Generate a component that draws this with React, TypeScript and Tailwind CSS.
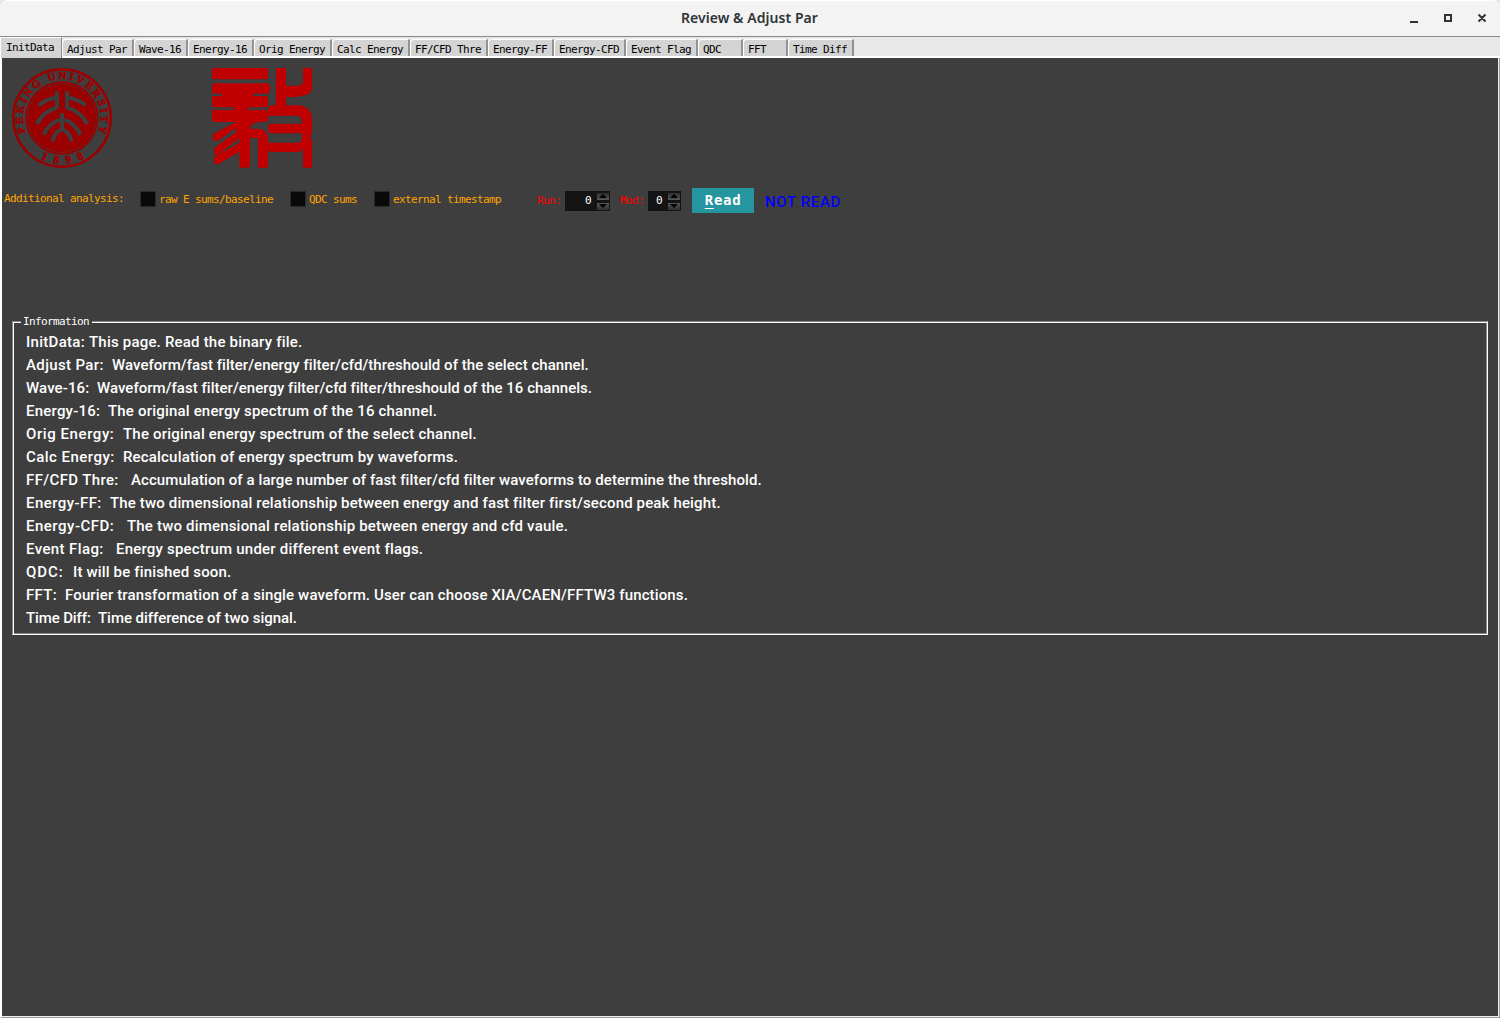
import { useLayoutEffect, useRef } from "react";

// Text stretched by letter spacing so that it takes exactly `width` pixels.
function FitText({ text, width, className = "" }: { text: string; width: number; className?: string }) {
  const ref = useRef<HTMLSpanElement>(null);
  useLayoutEffect(() => {
    const el = ref.current;
    if (!el) return;
    el.style.letterSpacing = "0px";
    const natural = el.getBoundingClientRect().width;
    el.style.letterSpacing = `${(width - natural) / text.length}px`;
  }, [text, width]);
  return (
    <span ref={ref} className={`inline-block shrink-0 whitespace-pre align-top ${className}`}>
      {text}
    </span>
  );
}

function Mono({ text, className = "" }: { text: string; className?: string }) {
  return (
    <FitText text={text} width={text.length * 6} className={`font-['DejaVu_Sans_Mono',monospace] text-[11px] ${className}`} />
  );
}

const tabs: [string, string][] = [
  ["Adjust Par", "w-[72px]"],
  ["Wave-16", "w-[54px]"],
  ["Energy-16", "w-[66px]"],
  ["Orig Energy", "w-[78px]"],
  ["Calc Energy", "w-[78px]"],
  ["FF/CFD Thre", "w-[78px]"],
  ["Energy-FF", "w-[66px]"],
  ["Energy-CFD", "w-[72px]"],
  ["Event Flag", "w-[72px]"],
  ["QDC", "w-[45px]"],
  ["FFT", "w-[45px]"],
  ["Time Diff", "w-[66px]"],
];

// Label, its advance up to the description, description, its width.
const info: [string, number, string, number][] = [
  ["InitData: ", 63, "This page. Read the binary file.", 213],
  ["Adjust Par:  ", 86, "Waveform/fast filter/energy filter/cfd/threshould of the select channel.", 476],
  ["Wave-16:  ", 71, "Waveform/fast filter/energy filter/cfd filter/threshould of the 16 channels.", 494],
  ["Energy-16:  ", 82, "The original energy spectrum of the 16 channel.", 329],
  ["Orig Energy:  ", 97, "The original energy spectrum of the select channel.", 354],
  ["Calc Energy:  ", 97, "Recalculation of energy spectrum by waveforms.", 335],
  ["FF/CFD Thre:   ", 105, "Accumulation of a large number of fast filter/cfd filter waveforms to determine the threshold.", 630],
  ["Energy-FF:  ", 84, "The two dimensional relationship between energy and fast filter first/second peak height.", 610],
  ["Energy-CFD:   ", 101, "The two dimensional relationship between energy and cfd vaule.", 441],
  ["Event Flag:   ", 90, "Energy spectrum under different event flags.", 307],
  ["QDC:  ", 47, "It will be finished soon.", 158],
  ["FFT:  ", 39, "Fourier transformation of a single waveform. User can choose XIA/CAEN/FFTW3 functions.", 623],
  ["Time Diff:  ", 72, "Time difference of two signal.", 199],
];

function Seal() {
  return (
    <svg viewBox="36 24 300 300" className="size-[100px] shrink-0 overflow-visible">
      <circle cx="186" cy="174" r="146" fill="none" stroke="#9b0000" strokeWidth="8" />
      <circle cx="186" cy="174" r="110" fill="#9b0000" />
      <circle cx="186" cy="174" r="103" fill="none" stroke="#3e3e3e" strokeWidth="2.5" strokeDasharray="9 4" />
      <g fill="none" stroke="#3e3e3e" strokeWidth="12">
        <path d="M171 94V144M201 94V144" />
        <path d="M171 112Q138 118 115 136M201 112Q234 118 257 136" />
        <path d="M173 142Q132 152 110 192M199 142Q240 152 262 192" />
        <path d="M186 160V208" />
        <path d="M186 178Q148 186 131 224M186 178Q224 186 241 224" />
        <path d="M186 208Q164 214 157 244M186 208Q208 214 215 244" />
      </g>
      <path id="sealTop" d="M78 219A117 117 0 1 1 294 219" fill="none" />
      <path id="sealBottom" d="M112 290A138 138 0 0 0 260 290" fill="none" />
      <g fill="#9b0000" stroke="#9b0000" strokeWidth="2" className="font-['Liberation_Serif',serif] font-bold">
        <text fontSize="32">
          <textPath href="#sealTop" textLength="456" startOffset="2">PEKING UNIVERSITY</textPath>
        </text>
        <text fontSize="34">
          <textPath href="#sealBottom" textLength="136" startOffset="11">1898</textPath>
        </text>
      </g>
    </svg>
  );
}

function Glyph() {
  return (
    <svg viewBox="36 24 300 300" className="size-[100px] shrink-0 overflow-visible" fill="#c00000">
      <path d="M41 24H204V53L200 58H41L36 53V29Z" />
      <path d="M41 70H204L210 78V92L204 101H160V108H198L204 113V136L198 142H144V150H198L204 156V181L198 186H178Q160 188 150 199V206H178Q204 210 204 238V323H174V234H150V318L144 323H118V275L52 314L42 308V292L118 248V234L54 285L42 283V265L108 216V204L52 244L39 240V222L108 186H41L36 180V150H101V142H41L36 136V108H66V101H41L36 95V76Z" />
      <path d="M228 24H258V77H293Q309 77 309 64V24H336V86Q330 107 304 107L292 111H258V136H300Q336 144 336 180V218L330 228L336 242V323H309V266L298 276H212L204 270V248H296Q306 246 306 234V220H212L204 214V196L212 191H306V182Q304 168 290 167H204V145L212 136H228Z" />
    </svg>
  );
}

function Check({ label, className }: { label: string; className: string }) {
  return (
    <label className={`flex h-4 items-start ${className}`}>
      <span className="mr-[3px] size-4 shrink-0 border border-[#2a2a2a] bg-[#090909]" />
      <Mono text={label} className="leading-[18px] text-[#ffa500]" />
    </label>
  );
}

function Spin({ className }: { className: string }) {
  return (
    <div className={`flex h-5 items-center justify-end bg-[#141414] pr-px ${className}`}>
      <Mono text="0" className="mr-[6px] leading-5 text-white" />
      <div className="flex flex-col gap-[3px]">
        <div className="flex h-[7px] w-3 items-center justify-center bg-linear-to-b from-[#2e2e2e] to-[#585858]">
          <svg viewBox="0 0 8 4" className="h-1 w-2"><path d="M0 4L4 0L8 4Z" /></svg>
        </div>
        <div className="flex h-[7px] w-3 items-center justify-center bg-linear-to-b from-[#585858] to-[#2e2e2e]">
          <svg viewBox="0 0 8 4" className="h-1 w-2"><path d="M0 0L4 4L8 0Z" /></svg>
        </div>
      </div>
    </div>
  );
}

export default function App() {
  return (
    <div className="flex h-[1018px] w-[1500px] flex-col overflow-hidden bg-[#e8e8e8]">
      <header className="flex h-9 shrink-0 items-center rounded-t-lg border-t border-white bg-[#f3f3f3]">
        <div className="w-[681px]" />
        <FitText text="Review & Adjust Par" width={137} className="-mt-[2px] font-['Noto_Sans','Open_Sans',sans-serif] text-[14px] leading-[34px] font-semibold text-[#2e3436]" />
        <svg viewBox="0 0 80 12" className="ml-[588px] h-3 w-20" fill="none" stroke="#2e3436" strokeWidth="2">
          <path d="M4 9H12M39 2H45V8H39ZM72.5 1.5L79.5 8.5M79.5 1.5L72.5 8.5" />
        </svg>
      </header>
      <nav className="flex h-[22px] shrink-0 items-end border-t border-[#8a8b80]">
        <div className="flex h-[21px] w-[62px] border-t border-r border-l border-t-white border-r-[#888] border-l-white bg-[#d4d4d4] pl-[5px]">
          <Mono text="InitData" className="leading-[19px] text-black" />
        </div>
        <div className="flex h-5 grow items-start border-b-2 border-white pt-px">
          {tabs.map(([name, width]) => (
            <div key={name} className={`h-[17px] shrink-0 rounded-tl-sm border-t border-r-2 border-l border-t-white border-r-[#929292] border-l-white bg-[#d4d4d4] pl-1 ${width}`}>
              <Mono text={name} className="leading-[19px] text-black" />
            </div>
          ))}
        </div>
      </nav>
      <main className="flex min-h-0 grow flex-col border-r border-b border-l-2 border-r-[#999] border-b-[#999] border-l-white bg-[#3e3e3e] shadow-[inset_-1px_-1px_0_#eeeeee]">
        <div className="flex gap-[100px] pt-[10px] pl-[10px]">
          <Seal />
          <Glyph />
        </div>
        <div className="mt-5 flex h-[25px] items-start">
          <div className="w-[138px] pl-[2px]">
            <Mono text="Additional analysis:" className="leading-[21px] text-[#ffa500]" />
          </div>
          <Check label="raw E sums/baseline" className="mt-[3px] w-[150px]" />
          <Check label="QDC sums" className="mt-[3px] w-[84px]" />
          <Check label="external timestamp" className="mt-[3px] w-[163px]" />
          <div className="w-7">
            <Mono text="Run:" className="leading-[25px] text-[#ff0000]" />
          </div>
          <Spin className="mt-[3px] w-[45px]" />
          <div className="w-[38px] pl-[10px]">
            <Mono text="Mod:" className="leading-[25px] text-[#ff0000]" />
          </div>
          <Spin className="mt-[3px] w-[33px]" />
          <button className="ml-[11px] flex h-[25px] w-[62px] justify-center bg-[#2596a0] text-white">
            <span className="font-['DejaVu_Sans_Mono',monospace] text-[14px] leading-[24px] font-bold tracking-[0.7px]">
              <span className="underline underline-offset-[3px]">R</span>ead
            </span>
          </button>
          <FitText text="NOT READ" width={76} className="ml-[11px] font-[Roboto,sans-serif] text-[15px] leading-[28px] font-medium text-[#0000ff]" />
        </div>
        <fieldset className="mr-[11px] ml-[10px] mt-[102px] h-[320px] border border-t-[#888] border-r-white border-b-white border-l-[#888] pl-[13px] shadow-[inset_1px_1px_0_#fff,inset_-1px_-1px_0_#888]">
          <legend className="-ml-[5px] h-[13px] bg-[#3e3e3e] pr-[3px] pl-[2px] leading-[13px]">
            <Mono text="Information" className="leading-[14px] text-white" />
          </legend>
          <div className="flex flex-col pt-[3px] font-[Roboto,sans-serif] text-[15px] font-medium text-white">
            {info.map(([label, labelWidth, text, width]) => (
              <div key={label} className="flex h-[23px] leading-[23px]">
                <FitText text={label} width={labelWidth} />
                <FitText text={text} width={width} />
              </div>
            ))}
          </div>
        </fieldset>
      </main>
    </div>
  );
}
